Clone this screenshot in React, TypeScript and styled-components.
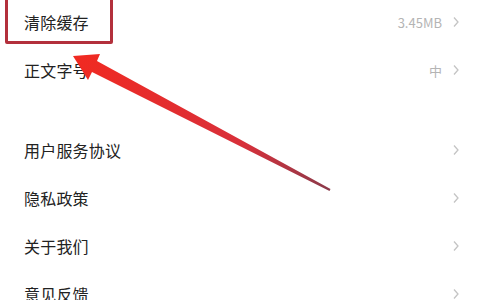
import React from "react";
import styled, { createGlobalStyle } from "styled-components";

const Global = createGlobalStyle`
  html, body { margin: 0; padding: 0; background: #ffffff; }
  body { font-family: "Noto Sans CJK SC", "Noto Sans", sans-serif; overflow: hidden; }
`;

const Page = styled.div`
  position: relative;
  width: 480px;
  height: 300px;
  overflow: hidden;
  background: #ffffff;
`;

const List = styled.div`
  display: flex;
  flex-direction: column;
  margin-top: -2px;
`;

const Section = styled.div<{ $gap?: number }>`
  display: flex;
  flex-direction: column;
  margin-top: ${(p) => p.$gap ?? 0}px;
`;

const Row = styled.div`
  display: flex;
  align-items: center;
  height: 48px;
  padding: 0 20px 0 24px;
`;

const Label = styled.span`
  flex: 1;
  font-size: 16px;
  color: #222222;
  letter-spacing: 0.2px;
`;

const Value = styled.span`
  font-size: 13px;
  color: #b4b4b4;
  margin-right: 10px;
`;

const Chevron = styled.svg`
  width: 8px;
  height: 12px;
  flex: none;
`;

const Highlight = styled.div`
  position: absolute;
  left: 5px;
  top: -4px;
  width: 102px;
  height: 42px;
  border: 3px solid #b3303c;
  border-radius: 2px;
  pointer-events: none;
`;

const Arrow = styled.svg`
  position: absolute;
  left: 0;
  top: 0;
  width: 480px;
  height: 300px;
  pointer-events: none;
`;

const Arr = () => (
  <Chevron viewBox="0 0 8 12">
    <path d="M2 1.5 L6 6 L2 10.5" fill="none" stroke="#c4c4c4" strokeWidth="1.3" />
  </Chevron>
);

type Item = { label: string; value?: string };

const first: Item[] = [
  { label: "清除缓存", value: "3.45MB" },
  { label: "正文字号", value: "中" },
];
const second: Item[] = [
  { label: "用户服务协议" },
  { label: "隐私政策" },
  { label: "关于我们" },
  { label: "意见反馈" },
];

export default function App() {
  return (
    <>
      <Global />
      <Page>
        <List>
          <Section>
            {first.map((it) => (
              <Row key={it.label}>
                <Label>{it.label}</Label>
                {it.value && <Value>{it.value}</Value>}
                <Arr />
              </Row>
            ))}
          </Section>
          <Section $gap={32}>
            {second.map((it) => (
              <Row key={it.label}>
                <Label>{it.label}</Label>
                <Arr />
              </Row>
            ))}
          </Section>
        </List>
        <Highlight />
        <Arrow viewBox="0 0 480 300">
          <defs>
            <linearGradient id="ag" x1="330" y1="190" x2="80" y2="60" gradientUnits="userSpaceOnUse">
              <stop offset="0" stopColor="#8a3a4a" />
              <stop offset="0.35" stopColor="#d8303a" />
              <stop offset="1" stopColor="#f02a22" />
            </linearGradient>
          </defs>
          <polygon
            points="73,56 100,54 97,61 330.5,189 329.5,191 92,72 88,80"
            fill="url(#ag)"
          />
        </Arrow>
      </Page>
    </>
  );
}
